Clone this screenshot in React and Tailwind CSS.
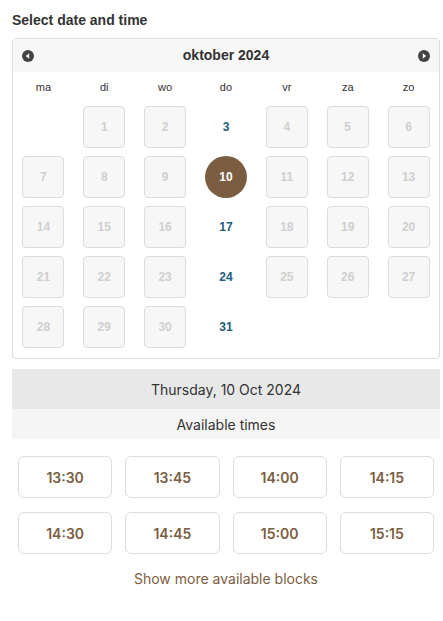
import React from 'react';

const dayNames = ['ma', 'di', 'wo', 'do', 'vr', 'za', 'zo'];
const available = [3, 17, 24, 31];
const selected = 10;
const times = ['13:30', '13:45', '14:00', '14:15', '14:30', '14:45', '15:00', '15:15'];

// october 2024 starts on a tuesday
const cells = [null, ...Array.from({ length: 31 }, (_, i) => i + 1)];

const DayCell = ({ day }) => {
  if (!day) return <div className="h-[50px]" />;
  if (day === selected) {
    return (
      <div className="h-[50px] flex items-center justify-center">
        <div className="w-[42px] h-[42px] rounded-full bg-[#7b5e42] text-white font-bold text-[12px] flex items-center justify-center">
          {day}
        </div>
      </div>
    );
  }
  if (available.includes(day)) {
    return (
      <div className="h-[50px] flex items-center justify-center text-[#1d5c7a] font-bold text-[12px]">
        {day}
      </div>
    );
  }
  return (
    <div className="h-[50px] flex items-center justify-center">
      <div className="w-[42px] h-[42px] rounded-[4px] border border-[#dcdcdc] bg-[#f7f7f7] text-[#cfcfcf] font-bold text-[12px] flex items-center justify-center">
        {day}
      </div>
    </div>
  );
};

const Arrow = ({ dir }) => (
  <svg width="12" height="12" viewBox="0 0 12 12">
    <circle cx="6" cy="6" r="6" fill="#444" />
    {dir === 'left' ? (
      <path d="M7.2 3.2 L3.8 6 L7.2 8.8 Z" fill="#fff" />
    ) : (
      <path d="M4.8 3.2 L8.2 6 L4.8 8.8 Z" fill="#fff" />
    )}
  </svg>
);

export default function App() {
  return (
    <div className="w-[443px] min-h-[621px] bg-white pl-3 pr-[3px] pt-[10px] font-['Liberation_Sans',Arial,sans-serif]">
      <h2 className="text-[14px] leading-5 font-bold text-[#333]">Select date and time</h2>

      <div className="mt-2 border border-[#ddd] rounded-[4px] pb-[6px]">
        <div className="h-[33px] bg-[#f7f7f7] flex items-center justify-between px-[9px]">
          <Arrow dir="left" />
          <span className="text-[14px] font-bold text-[#333]">oktober 2024</span>
          <Arrow dir="right" />
        </div>
        <div className="grid grid-cols-7 h-[30px] items-center">
          {dayNames.map(d => (
            <div key={d} className="text-center text-[11px] text-[#333]">{d}</div>
          ))}
        </div>
        <div className="grid grid-cols-7">
          {cells.map((d, i) => (
            <DayCell key={i} day={d} />
          ))}
        </div>
      </div>

      <div className="mt-[10px] font-['Inter',sans-serif]">
        <div className="h-10 bg-[#e8e8e8] flex items-center justify-center text-[14px] text-[#333]">
          Thursday, 10 Oct 2024
        </div>
        <div className="h-[30px] bg-[#f5f5f5] flex items-center justify-center text-[14px] text-[#333]">
          Available times
        </div>

        <div className="mt-[17px] px-[6px] grid grid-cols-4 gap-x-[13px] gap-y-[14px]">
          {times.map(t => (
            <button
              key={t}
              className="h-[42px] rounded-[6px] border border-[#ddd] bg-white text-[14px] font-semibold text-[#7b5e42]"
            >
              {t}
            </button>
          ))}
        </div>

        <div className="mt-[15px] text-center text-[14px] leading-5 text-[#7b5e42]">
          Show more available blocks
        </div>
      </div>
    </div>
  );
}
